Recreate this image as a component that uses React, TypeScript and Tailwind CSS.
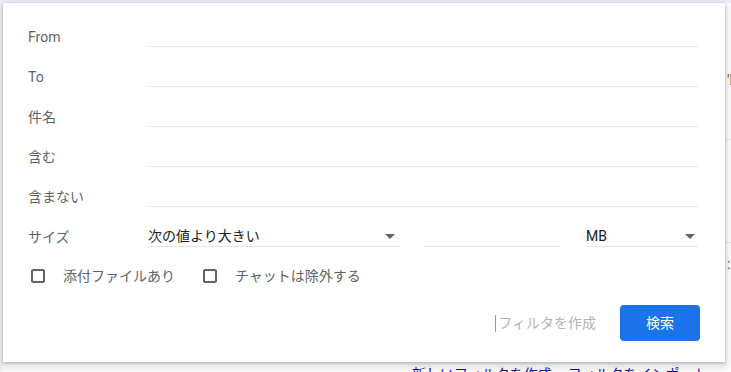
const font = { fontFamily: 'Roboto, "Noto Sans CJK JP", sans-serif' };

const fields = ['From', 'To', '件名', '含む', '含まない'];

const Caret = () => (
  <svg width="10" height="5" viewBox="0 0 10 5" className="shrink-0 mb-[7px]">
    <path d="M0 0h10L5 5z" fill="#5f6368" />
  </svg>
);

const Checkbox = ({ label }: { label: string }) => (
  <label className="flex items-center">
    <span className="w-[14px] h-[14px] border-2 border-[#5f6368] rounded-[2px] mx-[3px]" />
    <span className="ml-[15px] text-[14px] text-[#5f6368]">{label}</span>
  </label>
);

export default function App() {
  return (
    <div className="relative w-[731px] h-[372px] overflow-hidden bg-white" style={font}>
      {/* page behind the dropdown */}
      <div className="absolute inset-x-0 top-0 h-[3px] bg-[#eef2f8]" />
      <div className="absolute left-0 top-[3px] bottom-0 w-[3px] bg-[#f4f6f9]" />
      <div className="absolute left-[725px] right-0 top-[139px] h-px bg-[#e8eaed]" />
      <div className="absolute left-[725px] right-0 top-[242px] h-px bg-[#e8eaed]" />
      <div className="absolute left-[727px] top-[70px] text-[14px] text-[#444]">'l</div>
      <div className="absolute left-[727px] top-[254px] text-[14px] text-[#444]">:</div>
      <div className="absolute left-[412px] top-[364px] flex gap-4 text-[14px] text-[#1a0dab]">
        <span>新しいフィルタを作成</span>
        <span>フィルタをインポート</span>
      </div>

      {/* search options dropdown */}
      <div className="absolute left-[3px] top-[3px] w-[722px] h-[359px] bg-white pt-[4px] pl-[25px] pr-[27px] shadow-[0_1px_3px_rgba(60,64,67,0.35),0_4px_8px_3px_rgba(60,64,67,0.15)]">
        {fields.map((f) => (
          <div key={f} className="flex items-end h-10">
            <div className="w-[120px] text-[14px] leading-5 text-[#5f6368]">{f}</div>
            <div className="flex-1 h-[28px] border-b border-[#e8eaed]" />
          </div>
        ))}
        <div className="flex items-end h-10">
          <div className="w-[120px] text-[14px] leading-5 text-[#5f6368]">サイズ</div>
          <div className="w-[252px] flex items-end justify-between pr-[5px] h-[28px] border-b border-[#e3e5e8] text-[14px] leading-5 text-[#202124]">
            <span>次の値より大きい</span>
            <Caret />
          </div>
          <div className="w-[137px] ml-[24px] h-[28px] border-b border-[#e3e5e8]" />
          <div className="flex-1 ml-[25px] flex items-end justify-between pr-[3px] h-[28px] border-b border-[#e3e5e8] text-[14px] leading-5 text-[#202124]">
            <span>MB</span>
            <Caret />
          </div>
        </div>
        <div className="flex items-center h-[58px] gap-[25px]">
          <Checkbox label="添付ファイルあり" />
          <Checkbox label="チャットは除外する" />
        </div>
        <div className="flex items-center justify-end gap-[24px] -mr-[2px]">
          <div className="flex items-center text-[14px] text-[#b4b4b4]">
            <span className="w-px h-[17px] bg-[#9a9a9a] mr-[2px]" />
            フィルタを作成
          </div>
          <button className="w-[80px] h-[36px] rounded-[4px] bg-[#1a73e8] text-white text-[14px]">
            検索
          </button>
        </div>
      </div>
    </div>
  );
}
